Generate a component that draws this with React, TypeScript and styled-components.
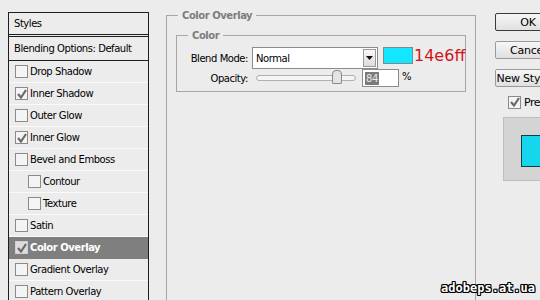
import React from "react";
import styled, { createGlobalStyle } from "styled-components";

const Global = createGlobalStyle`
  html, body { margin: 0; padding: 0; background: #ececec; }
  body { font-family: "DejaVu Sans", sans-serif; font-size: 10px; color: #000; overflow: hidden; }
  #root { width: 540px; height: 300px; overflow: hidden; position: relative; }
`;

const Page = styled.div`
  display: flex;
  align-items: flex-start;
  width: 540px;
  height: 300px;
  font-family: "DejaVu Sans", sans-serif;
  font-size: 10px;
  letter-spacing: -0.45px;
`;

const StylesPanel = styled.div`
  margin: 12px 0 0 8px;
  width: 139px;
  height: 320px;
  border: 1px solid #1e1e1e;
  flex-shrink: 0;
  background: #ececec;
`;

const PanelHeader = styled.div`
  height: 21px;
  display: flex;
  align-items: center;
  padding-left: 5px;
  border-bottom: 3px double #1e1e1e;
`;

const BlendRow = styled.div`
  height: 23px;
  display: flex;
  align-items: center;
  padding-left: 5px;
  border-bottom: 1px solid #1e1e1e;
`;

const Row = styled.div<{ $indent?: boolean; $selected?: boolean }>`
  height: 21px;
  display: flex;
  align-items: center;
  gap: 2px;
  padding-left: ${(p) => (p.$indent ? "19px" : "6px")};
  border-bottom: 1px solid ${(p) => (p.$selected ? "#7f7f7f" : "#fafafa")};
  background: ${(p) => (p.$selected ? "#7f7f7f" : "transparent")};
  color: ${(p) => (p.$selected ? "#fff" : "#000")};
  font-weight: ${(p) => (p.$selected ? "bold" : "normal")};
`;

const Box = styled.span<{ $dark?: boolean }>`
  width: 11px;
  height: 11px;
  border: 1px solid ${(p) => (p.$dark ? "#d0d0d0" : "#8a8a8a")};
  background: ${(p) => (p.$dark ? "#dcdcdc" : "#f4f4f4")};
  display: inline-flex;
  align-items: center;
  justify-content: center;
  flex-shrink: 0;
`;

const Check = ({ color = "#6a6a6a" }: { color?: string }) => (
  <svg width="10" height="10" viewBox="0 0 10 10">
    <path d="M1 5 L4 8.5 L9 1" stroke={color} strokeWidth="2.2" fill="none" />
  </svg>
);

const Main = styled.div`
  margin: 10px 0 0 17px;
  width: 310px;
  flex-shrink: 0;
`;

const Group = styled.fieldset<{ $inner?: boolean }>`
  margin: 0;
  border: 1px solid #a6a6a6;
  padding: ${(p) => (p.$inner ? "6px 0 4px 0" : "9px 9px 0 9px")};
  height: ${(p) => (p.$inner ? "auto" : "300px")};
  box-sizing: border-box;
`;

const Legend = styled.legend<{ $inner?: boolean }>`
  padding: 0 4px;
  margin-left: ${(p) => (p.$inner ? "11px" : "2px")};
  font-weight: bold;
  color: #7d7d7d;
  font-size: 10px;
`;

const FieldRow = styled.div<{ $h: number }>`
  display: flex;
  align-items: center;
  height: ${(p) => p.$h}px;
`;

const Label = styled.span`
  width: 71px;
  text-align: right;
  padding-right: 4px;
  flex-shrink: 0;
`;

const Select = styled.div`
  width: 126px;
  height: 22px;
  border: 1px solid #8c8c8c;
  background: #fff;
  display: flex;
  align-items: center;
  justify-content: space-between;
  padding-left: 3px;
  box-sizing: border-box;
`;

const ArrowBtn = styled.div`
  width: 13px;
  height: 18px;
  margin-right: 1px;
  border: 1px solid #9a9a9a;
  background: linear-gradient(#f8f8f8, #dcdcdc);
  display: flex;
  align-items: center;
  justify-content: center;
  box-sizing: border-box;
`;

const Swatch = styled.div`
  width: 30px;
  height: 17px;
  margin: -5px 0 0 5px;
  background: #14e6ff;
  border: 1px solid #7a8a90;
  box-sizing: border-box;
`;

const HexText = styled.span`
  font-family: "DejaVu Sans", sans-serif;
  font-size: 16px;
  color: #cf1420;
  margin: -5px 0 0 1px;
  letter-spacing: 0;
`;

const Slider = styled.div`
  position: relative;
  width: 98px;
  height: 4px;
  margin-left: 4px;
  border: 1px solid #b0b0b0;
  border-radius: 3px;
  background: #f4f4f4;
`;

const Thumb = styled.div`
  position: absolute;
  left: 75px;
  top: -6px;
  width: 8px;
  height: 12px;
  border: 1px solid #888;
  border-radius: 4px 4px 1px 1px;
  background: #e4e4e4;
`;

const NumInput = styled.div`
  margin-left: 6px;
  width: 37px;
  height: 18px;
  border: 1px solid #8c8c8c;
  background: #fff;
  display: flex;
  align-items: center;
  padding-left: 2px;
  box-sizing: border-box;
`;

const Sel = styled.span`
  background: #7a7a7a;
  color: #e8e8e8;
  padding: 0 1px;
  line-height: 13px;
`;

const Pct = styled.span`
  margin: -4px 0 0 3px;
`;

const Side = styled.div`
  margin: 13px 0 0 19px;
  width: 70px;
  flex-shrink: 0;
  display: flex;
  flex-direction: column;
  align-items: flex-start;
`;

const Button = styled.div<{ $default?: boolean }>`
  width: 66px;
  height: 18px;
  box-sizing: border-box;
  border: 1px solid ${(p) => (p.$default ? "#3a3a3a" : "#9a9a9a")};
  border-radius: 2px;
  background: linear-gradient(#f6f6f6, #e0e0e0);
  display: flex;
  align-items: center;
  justify-content: center;
  font-size: 11px;
  letter-spacing: -0.2px;
  margin-bottom: 10px;
  white-space: nowrap;
`;

const PreviewRow = styled.div`
  display: flex;
  align-items: center;
  gap: 3px;
  margin: -1px 0 0 13px;
  height: 12px;
  font-size: 11px;
`;

const PreviewBox = styled.div`
  margin: 9px 0 0 8px;
  width: 60px;
  height: 64px;
  box-sizing: border-box;
  border: 1px solid #bdbdbd;
  background: #d4d4d4;
  padding: 17px 0 0 17px;
`;

const PreviewSquare = styled.div`
  width: 34px;
  height: 32px;
  box-sizing: border-box;
  border: 1px solid #1b3b44;
  background: #16d6ee;
`;

const Watermark = styled.div`
  position: absolute;
  right: 5px;
  bottom: 5px;
  font-family: "DejaVu Sans Mono", monospace;
  font-weight: bold;
  font-size: 12px;
  color: #fff;
  letter-spacing: 0;
  text-shadow: 1px 0 0 #000, -1px 0 0 #000, 0 1px 0 #000, 0 -1px 0 #000,
    1px 1px 0 #000, -1px -1px 0 #000, 1px -1px 0 #000, -1px 1px 0 #000;
`;

type Item = { name: string; checked?: boolean; indent?: boolean; selected?: boolean };
const items: Item[] = [
  { name: "Drop Shadow" },
  { name: "Inner Shadow", checked: true },
  { name: "Outer Glow" },
  { name: "Inner Glow", checked: true },
  { name: "Bevel and Emboss" },
  { name: "Contour", indent: true },
  { name: "Texture", indent: true },
  { name: "Satin" },
  { name: "Color Overlay", checked: true, selected: true },
  { name: "Gradient Overlay" },
  { name: "Pattern Overlay" },
];

export default function App() {
  return (
    <>
      <Global />
      <Page>
        <StylesPanel>
          <PanelHeader>Styles</PanelHeader>
          <BlendRow>Blending Options: Default</BlendRow>
          {items.map((it) => (
            <Row key={it.name} $indent={it.indent} $selected={it.selected}>
              <Box $dark={it.selected}>{it.checked && <Check color="#6a6a6a" />}</Box>
              {it.name}
            </Row>
          ))}
        </StylesPanel>
        <Main>
          <Group>
            <Legend>Color Overlay</Legend>
            <Group $inner>
              <Legend $inner>Color</Legend>
              <FieldRow $h={22}>
                <Label>Blend Mode:</Label>
                <Select>
                  Normal
                  <ArrowBtn>
                    <svg width="7" height="4" viewBox="0 0 7 4">
                      <path d="M0 0 H7 L3.5 4 Z" fill="#111" />
                    </svg>
                  </ArrowBtn>
                </Select>
                <Swatch />
                <HexText>14e6ff</HexText>
              </FieldRow>
              <FieldRow $h={18}>
                <Label>Opacity:</Label>
                <Slider>
                  <Thumb />
                </Slider>
                <NumInput>
                  <Sel>84</Sel>
                </NumInput>
                <Pct>%</Pct>
              </FieldRow>
            </Group>
          </Group>
        </Main>
        <Side>
          <Button $default>OK</Button>
          <Button>Cancel</Button>
          <Button>New Style...</Button>
          <PreviewRow>
            <Box>
              <Check />
            </Box>
            Preview
          </PreviewRow>
          <PreviewBox>
            <PreviewSquare />
          </PreviewBox>
        </Side>
      </Page>
      <Watermark>adobeps.at.ua</Watermark>
    </>
  );
}
